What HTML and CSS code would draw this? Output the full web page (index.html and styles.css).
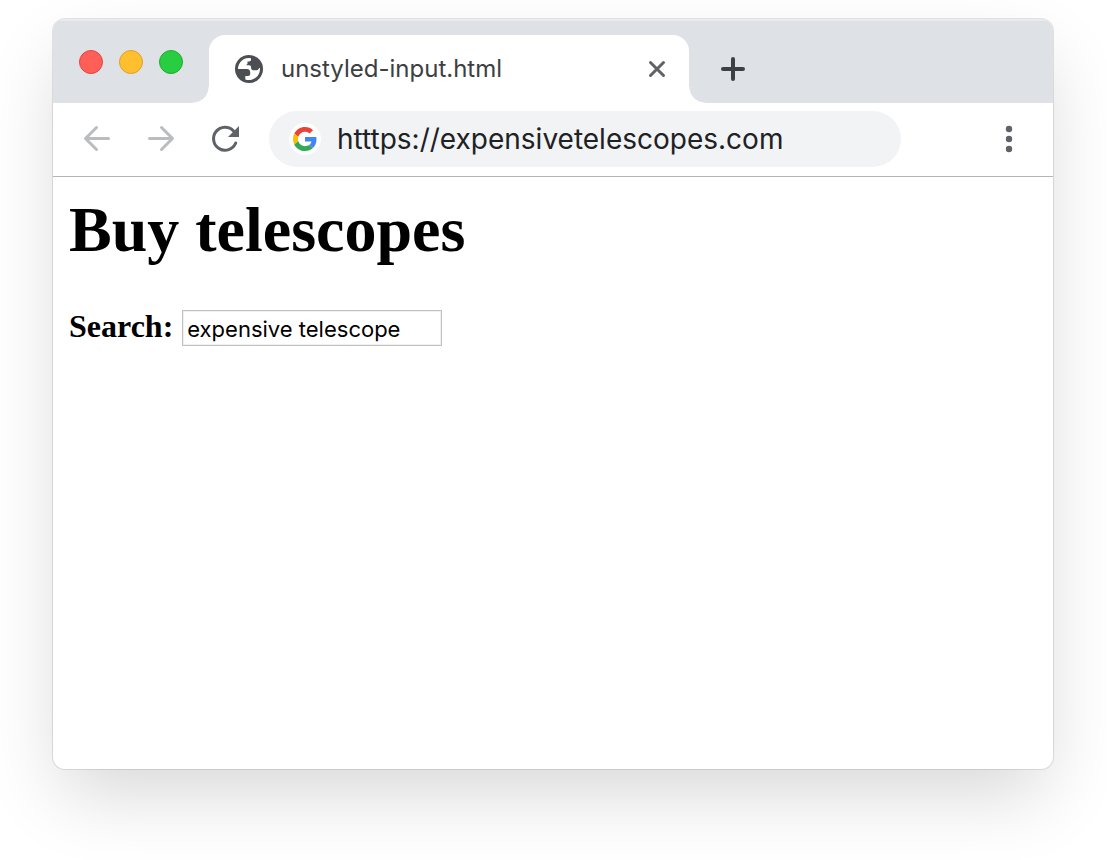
FILE: index.html
```html
<!DOCTYPE html>
<html lang="en">
<head>
<meta charset="utf-8">
<title>Buy telescopes</title>
<link rel="stylesheet" href="styles.css">
</head>
<body>
<div class="window">
  <header class="tab-strip">
    <div class="traffic-lights">
      <button class="light light-close" aria-label="Close window"></button>
      <button class="light light-minimize" aria-label="Minimize window"></button>
      <button class="light light-zoom" aria-label="Zoom window"></button>
    </div>
    <div class="tab">
      <svg class="globe" viewBox="0 0 28 28" aria-hidden="true">
        <circle cx="14" cy="14" r="14" fill="#4b4f54"/>
        <path fill="#fff" d="M3 14A11 11 0 0 1 16 3.200V4.600C16 6 15.200 6.500 14 6.500H12.500V8.500C12.500 9.200 12 9.600 11.400 9.700V10.200H14.200C15.500 10.200 16 11 16 12.200C16 14.200 17 15.300 19 15.300H21.500C23.300 15.300 23.600 13 24.900 12.700A11 11 0 0 1 10.300 24.400V21H13C14.400 21 15.200 20.200 15.200 18.800V17.500C15.200 15.500 14.200 14 12 14Z"/>
      </svg>
      <span class="tab-title">unstyled-input.html</span>
      <button class="icon-button tab-close" aria-label="Close tab">
        <svg width="18" height="18" viewBox="0 0 18 18" aria-hidden="true"><path d="M2.500 2.500 15.500 15.500M15.500 2.500 2.500 15.500" fill="none" stroke="#5f6368" stroke-width="3" stroke-linecap="round"/></svg>
      </button>
    </div>
    <button class="icon-button new-tab" aria-label="New tab">
      <svg width="24" height="24" viewBox="0 0 24 24" aria-hidden="true"><path d="M12 2V22M2 12H22" fill="none" stroke="#3c4043" stroke-width="4" stroke-linecap="round"/></svg>
    </button>
  </header>
  <nav class="toolbar" aria-label="Navigation">
    <button class="icon-button" aria-label="Back">
      <svg width="28" height="28" viewBox="0 0 28 28" aria-hidden="true"><path d="M25.500 13.500H3M13.500 2.500 2.500 13.500 13.500 24.500" fill="none" stroke="#babcbe" stroke-width="3" stroke-linecap="round" stroke-linejoin="round"/></svg>
    </button>
    <button class="icon-button" aria-label="Forward">
      <svg width="28" height="28" viewBox="0 0 28 28" aria-hidden="true"><path d="M2.500 13.500H25M14.500 2.500 25.500 13.500 14.500 24.500" fill="none" stroke="#babcbe" stroke-width="3" stroke-linecap="round" stroke-linejoin="round"/></svg>
    </button>
    <button class="icon-button" aria-label="Reload">
      <svg width="28" height="28" viewBox="0 0 28 28" aria-hidden="true"><path d="M24.700 18A11.500 11.500 0 1 1 22.500 5.900" fill="none" stroke="#5f6368" stroke-width="3" stroke-linecap="round"/><path d="M28 1V12H17Z" fill="#5f6368"/></svg>
    </button>
    <div class="omnibox">
      <span class="google-badge">
        <svg width="24" height="24" viewBox="0 0 48 48" aria-hidden="true">
          <path fill="#ea4335" d="M24 9.500c3.540 0 6.710 1.220 9.210 3.600l6.850-6.850C35.900 2.380 30.470 0 24 0 14.620 0 6.510 5.380 2.560 13.220l7.980 6.190C12.430 13.720 17.740 9.500 24 9.500z"/>
          <path fill="#4285f4" d="M46.980 24.550c0-1.570-.15-3.090-.38-4.550H24v9.020h12.940c-.58 2.960-2.260 5.480-4.780 7.180l7.730 6c4.510-4.180 7.090-10.360 7.090-17.650z"/>
          <path fill="#fbbc05" d="M10.530 28.590c-.48-1.450-.76-2.990-.76-4.590s.27-3.140.76-4.590l-7.980-6.190C.92 16.460 0 20.120 0 24c0 3.880.92 7.540 2.560 10.780l7.970-6.190z"/>
          <path fill="#34a853" d="M24 48c6.480 0 11.930-2.130 15.890-5.810l-7.730-6c-2.150 1.450-4.920 2.300-8.160 2.300-6.260 0-11.570-4.220-13.470-9.910l-7.980 6.190C6.510 42.620 14.620 48 24 48z"/>
        </svg>
      </span>
      <input class="address" type="text" aria-label="Address" value="htttps://expensivetelescopes.com">
    </div>
    <button class="icon-button menu" aria-label="Menu">
      <svg width="8" height="28" viewBox="0 0 8 28" aria-hidden="true"><g fill="#5f6368"><circle cx="4" cy="4" r="3.200"/><circle cx="4" cy="14" r="3.200"/><circle cx="4" cy="24" r="3.200"/></g></svg>
    </button>
  </nav>
  <main class="page">
    <h1 class="heading">Buy telescopes</h1>
    <form class="search">
      <label class="search-label" for="search">Search:</label>
      <input class="search-input" id="search" type="text" value="expensive telescope">
    </form>
  </main>
</div>
</body>
</html>
```
FILE: styles.css
```css
* {
  box-sizing: border-box;
}

body {
  min-height: 100vh;
  margin: 0;
  padding: 19px 54px 91px 53px;
  display: flex;
  background: #fff;
}

.window {
  flex: 1;
  display: flex;
  flex-direction: column;
  overflow: hidden;
  border-radius: 12px;
  background: #fff;
  box-shadow: 0 0 0 1px rgba(0, 0, 0, 0.1), 0 32px 76px -8px rgba(0, 0, 0, 0.16);
}

.tab-strip {
  display: flex;
  padding-top: 16px;
  background: #dee1e6;
  box-shadow: inset 0 2px 0 #e9ebee;
}

.traffic-lights {
  display: flex;
  gap: 16px;
  padding: 15px 26px;
}

.light {
  width: 24px;
  height: 24px;
  padding: 0;
  border: 1px solid;
  border-radius: 50%;
}

.light-close {
  background: #ff5f57;
  border-color: #e0443e;
}

.light-minimize {
  background: #ffbf2f;
  border-color: #dea123;
}

.light-zoom {
  background: #28cd41;
  border-color: #1dad2b;
}

.tab {
  position: relative;
  flex: 0 1 480px;
  display: flex;
  align-items: center;
  height: 68px;
  padding: 0 22px 0 26px;
  border-radius: 16px 16px 0 0;
  background: #fff;
}

.tab::before,
.tab::after {
  content: "";
  position: absolute;
  bottom: 0;
  width: 16px;
  height: 16px;
}

.tab::before {
  right: 100%;
  background: radial-gradient(circle at 0 0, #dee1e6 15px, #fff 16px);
}

.tab::after {
  left: 100%;
  background: radial-gradient(circle at 100% 0, #dee1e6 15px, #fff 16px);
}

.globe {
  width: 28px;
  height: 28px;
  margin-right: 18px;
}

.tab-title {
  flex: 1;
  color: #3c4043;
  font: 24px/32px Inter, sans-serif;
}

.icon-button {
  display: flex;
  padding: 0;
  border: 0;
  background: none;
}

.tab-close {
  padding: 1px;
}

.new-tab {
  align-self: center;
  margin-left: 32px;
}

.toolbar {
  display: flex;
  align-items: center;
  gap: 36px;
  height: 74px;
  padding: 0 40px 1px 30px;
  border-bottom: 1px solid #b4b5b7;
}

.omnibox {
  flex: 0 1 632px;
  display: flex;
  align-items: center;
  gap: 16px;
  height: 56px;
  margin-left: -6px;
  padding: 0 20px;
  border-radius: 28px;
  background: #f1f3f4;
}

.google-badge {
  display: flex;
  padding: 4px;
  border-radius: 50%;
  background: #fff;
}

.address {
  flex: 1;
  min-width: 0;
  padding: 0;
  border: 0;
  outline: 0;
  background: none;
  color: #202124;
  font: 28px/40px Inter, sans-serif;
}

.menu {
  margin-left: auto;
}

.page {
  flex: 1;
  padding: 15px 16px;
  color: #000;
  font-family: "Liberation Serif", serif;
}

.heading {
  margin: 0 0 42px;
  font-size: 64px;
  line-height: 76px;
}

.search {
  display: flex;
  align-items: flex-start;
  gap: 9px;
}

.search-label {
  font-size: 32px;
  line-height: 32px;
  font-weight: bold;
}

.search-input {
  width: 260px;
  height: 36px;
  padding: 2px 4px 0;
  border: 1px solid #c0c0c0;
  border-radius: 0;
  outline: 0;
  background: #fff;
  box-shadow: inset 0 0 0 1px #f0f0f0;
  color: #000;
  font: 22px/32px Inter, sans-serif;
}
```
